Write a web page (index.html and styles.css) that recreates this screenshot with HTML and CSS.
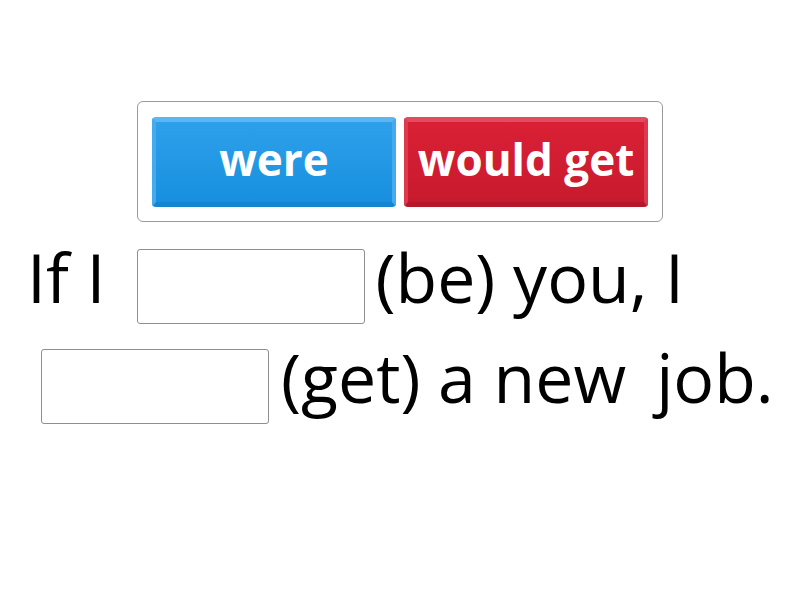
FILE: index.html
```html
<!DOCTYPE html>
<html>
<head>
<meta charset="utf-8">
<link rel="stylesheet" href="styles.css">
</head>
<body>
<div class="page">
  <div class="tray">
    <div class="tile tile-blue">were</div>
    <div class="tile tile-red">would get</div>
  </div>
  <div class="sentence">
    <div class="line line-1">
      <span class="word">If I</span>
      <span class="slot slot-1"></span>
      <span class="word">(be) you, I</span>
    </div>
    <div class="line line-2">
      <span class="slot slot-2"></span>
      <span class="word">(get) a new</span>
      <span class="word word-last">job.</span>
    </div>
  </div>
</div>
</body>
</html>
```
FILE: styles.css
```css
html, body {
  margin: 0;
  padding: 0;
  background: #ffffff;
}
.page {
  width: 800px;
  height: 600px;
  padding-top: 101px;
  box-sizing: border-box;
  font-family: "Open Sans", "Liberation Sans", sans-serif;
}
.tray {
  margin-left: 137px;
  width: 526px;
  height: 121px;
  box-sizing: border-box;
  border: 1px solid #9a9a9a;
  border-radius: 6px;
  padding: 15px 14px;
  display: flex;
  gap: 8px;
}
.tile {
  width: 244px;
  height: 90px;
  box-sizing: border-box;
  border-radius: 4px;
  border-style: solid;
  border-width: 5px 4px 5px 4px;
  display: flex;
  align-items: center;
  justify-content: center;
  color: #ffffff;
  font-weight: 700;
  font-size: 44px;
  font-stretch: 90%;
  padding-bottom: 6px;
}
.tile-blue {
  background: linear-gradient(#2ea0ea, #1890df);
  border-color: #5cb6f2 #45aaee #1585d2 #45aaee;
}
.tile-red {
  background: linear-gradient(#da2035, #c81a2e);
  border-color: #e34c5e #dd3a4d #b3182b #dd3a4d;
}
.sentence {
  margin-top: 27px;
  font-size: 68px;
  color: #000000;
}
.line {
  display: flex;
  align-items: center;
  height: 75px;
}
.line-1 {
  padding-left: 27px;
}
.line-2 {
  margin-top: 25px;
  padding-left: 41px;
}
.word {
  white-space: pre;
  line-height: 1;
  margin-top: -20px;
}
.slot {
  width: 228px;
  height: 75px;
  box-sizing: border-box;
  border: 1px solid #8e8e8e;
  border-radius: 3px;
  background: #ffffff;
}
.slot-1 {
  margin: 0 11px 0 31px;
}
.slot-2 {
  margin-right: 12px;
}
.word-last {
  margin-left: 30px;
}
```
